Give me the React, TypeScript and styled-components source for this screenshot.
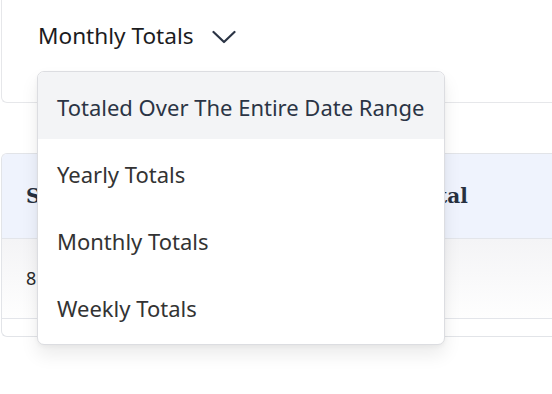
import styled, { createGlobalStyle } from 'styled-components'

const GlobalStyle = createGlobalStyle`
  html, body {
    margin: 0;
    padding: 0;
    background: #fff;
    overflow: hidden;
  }
  body {
    font-family: "Noto Sans", "Open Sans", sans-serif;
  }
`

const Page = styled.div`
  position: relative;
  width: 552px;
  height: 394px;
  padding-left: 1px;
  box-sizing: border-box;
`

// the card runs on past the right edge of the frame, so only its left side shows
const FilterCard = styled.div`
  height: 103px;
  box-sizing: border-box;
  border: 1px solid #e6e7ea;
  border-top: none;
  border-right: none;
  border-radius: 0 0 0 6px;
  padding: 20px 0 0 36px;
`

const Trigger = styled.button`
  display: flex;
  align-items: center;
  gap: 18px;
  background: none;
  border: none;
  padding: 0;
  font-family: inherit;
  font-size: 22.6px;
  color: #1c1c1e;
  cursor: pointer;
`

const Chevron = styled.svg`
  width: 24px;
  height: 14px;
  margin-top: 2px;
`

const TableCard = styled.div`
  margin-top: 50px;
  box-sizing: border-box;
  border: 1px solid #e2e4e8;
  border-right: none;
  border-radius: 6px 0 0 6px;
  overflow: hidden;
`

const Row = styled.div<{ $head?: boolean }>`
  display: grid;
  grid-template-columns: 386px 1fr;
  align-items: center;
  padding-left: 24px;
  height: ${p => (p.$head ? 84 : 79)}px;
  border-bottom: 1px solid #e3e5ea;
  background: ${p => (p.$head ? '#eff3fd' : 'linear-gradient(#f4f4f6, #fefefe)')};
`

const HeadCell = styled.span`
  font-family: "DejaVu Serif", "Liberation Serif", serif;
  font-weight: 700;
  font-size: 20px;
  color: #27303f;
`

const Cell = styled.span`
  font-size: 18px;
  color: #2a2a2a;
  margin-top: -2px;
`

const Footer = styled.div`
  height: 17px;
`

const Menu = styled.ul`
  position: absolute;
  left: 37px;
  top: 71px;
  width: 408px;
  margin: 0;
  padding: 0 0 4px;
  list-style: none;
  background: #fff;
  border: 1px solid #dcdde1;
  border-radius: 7px;
  box-shadow: 0 10px 18px rgba(0, 0, 0, 0.08), 0 2px 4px rgba(0, 0, 0, 0.04);
  overflow: hidden;
  box-sizing: border-box;
`

const Item = styled.li<{ $active?: boolean }>`
  height: 67px;
  display: flex;
  align-items: center;
  padding: 3px 0 0 19px;
  box-sizing: border-box;
  font-size: 22px;
  color: ${p => (p.$active ? '#2b3445' : '#333')};
  background: ${p => (p.$active ? '#f3f4f6' : 'transparent')};
`

const OPTIONS = ['Totaled Over The Entire Date Range', 'Yearly Totals', 'Monthly Totals', 'Weekly Totals']

export default function App() {
  return (
    <>
      <GlobalStyle />
      <Page>
        <FilterCard>
          <Trigger>
            Monthly Totals
            <Chevron viewBox="0 0 24 14" fill="none">
              <path d="M1.5 2L12 12L22.5 2" stroke="#2b3445" strokeWidth="2.2" strokeLinecap="round" strokeLinejoin="round" />
            </Chevron>
          </Trigger>
        </FilterCard>

        <TableCard>
          <Row $head>
            <HeadCell>Source</HeadCell>
            <HeadCell>Total</HeadCell>
          </Row>
          <Row>
            <Cell>8</Cell>
            <Cell />
          </Row>
          <Footer />
        </TableCard>

        <Menu>
          {OPTIONS.map((o, i) => (
            <Item key={o} $active={i === 0}>{o}</Item>
          ))}
        </Menu>
      </Page>
    </>
  )
}
